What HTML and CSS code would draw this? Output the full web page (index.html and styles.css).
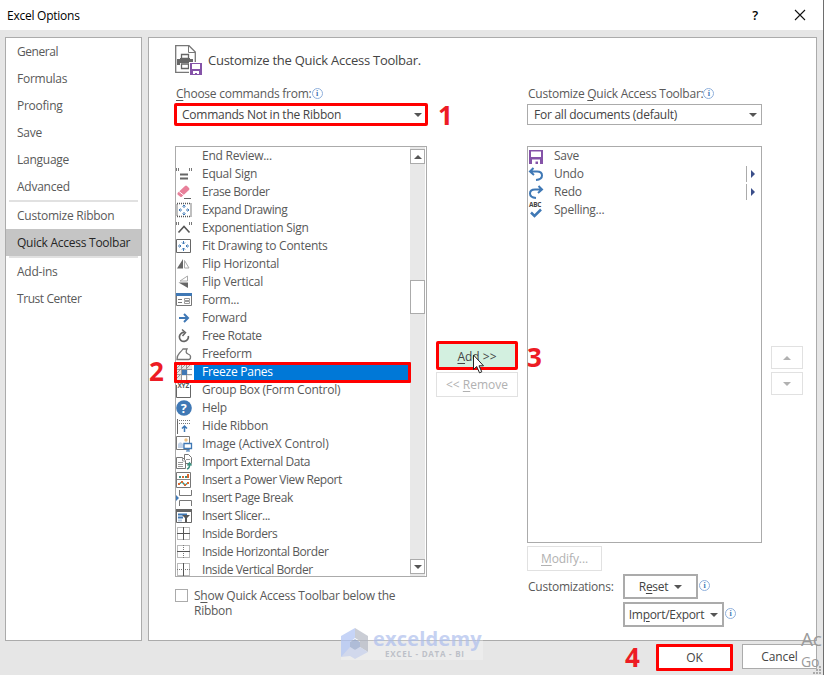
FILE: index.html
```html
<!DOCTYPE html>
<html lang="en">
<head>
    <meta charset="UTF-8">
    <meta name="viewport" content="width=device-width, initial-scale=1.0">
    <title>Excel Options</title>
    <link rel="stylesheet" href="styles.css">
</head>
<body>
    <div class="window">
        <header class="titlebar">
            <span class="title">Excel Options</span>
            <span class="help">?</span>
            <svg class="close" width="12" height="12" viewBox="0 0 12 12"><path d="M1 1l10 10M11 1L1 11" stroke="#111" stroke-width="1.1"/></svg>
        </header>

        <main class="main">
            <nav class="nav">
                <a class="tight">General</a>
                <a>Formulas</a>
                <a>Proofing</a>
                <a>Save</a>
                <a>Language</a>
                <a>Advanced</a>
                <hr>
                <a>Customize Ribbon</a>
                <a class="active">Quick Access Toolbar</a>
                <hr>
                <a>Add-ins</a>
                <a class="tight">Trust Center</a>
            </nav>

            <section class="panel">
                <div class="heading">
                    <svg width="28" height="31" viewBox="0 0 28 31">
                        <path d="M.7.7H14L20.3 7V27.3H.7z" fill="#fff" stroke="#777" stroke-width="1.3"/>
                        <path d="M13.5 1v6.5H20" fill="none" stroke="#777"/>
                        <path d="M2 14h3v-1h10v1h3v6h-3v-2H5v2H2z" fill="#666"/>
                        <path d="M6.5 9.5h7v4h-7zM6.5 19h7v4.500h-7z" fill="#fff" stroke="#666" stroke-width="1.3"/>
                        <path d="M14 17h14v14H14z" fill="#fff"/>
                        <path d="M15 18h12v12H15z" fill="#8553a8"/>
                        <path d="M17 19h8v5h-8zM18 26h6v3h-2v-1h-2v1h-2z" fill="#fff"/>
                    </svg>
                    <h1>Customize the Quick Access Toolbar.</h1>
                </div>

                <div class="columns">
                    <div class="col-left">
                        <div class="label"><span><u>C</u>hoose commands from:</span><i class="info">i</i></div>
                        <div class="select marked"><span>Commands Not in the Ribbon</span><b class="down"></b></div>
                        <div class="list commands">
                            <ul>
                                <li><svg></svg><span>End Review...</span></li>
                                <li><svg viewBox="0 0 16 16"><path d="M.5 2v3M2.500 2v3M13.500 2v3M15.500 2v3" stroke="#777"/><path d="M4 8.500h8M4 12.500h8" stroke="#666" stroke-width="2"/></svg><span>Equal Sign</span></li>
                                <li><svg viewBox="0 0 16 16"><path d="M1.500 9L9 2q1-1 2 0l2 2q1 1 0 2L6 12.500q-1 1-2 0L1.500 10.500z" fill="#e8809a"/><path d="M3 7.500l5 4" stroke="#fff"/><path d="M8 14.500h7" stroke="#666"/></svg><span class="tight">Erase Border</span></li>
                                <li><svg viewBox="0 0 16 16"><path d="M1 1.500h14v13H1z" fill="none" stroke="#555" stroke-width="1.500" stroke-dasharray="1 1"/><path d="M8 3v3M8 10v3M3 8h3M10 8h3" stroke="#3f78b5"/><path d="M6.500 4.500L8 3l1.500 1.500M6.500 11.500L8 13l1.500-1.500M4.500 6.500L3 8l1.500 1.500M11.500 6.500L13 8l-1.500 1.500" fill="none" stroke="#3f78b5"/></svg><span class="tight">Expand Drawing</span></li>
                                <li><svg viewBox="0 0 16 16"><path d="M.5 2v3M2.500 2v3M13.500 2v3M15.500 2v3" stroke="#777"/><path d="M2.500 12.500L8 6.500l5.500 6" fill="none" stroke="#555" stroke-width="1.600"/></svg><span>Exponentiation Sign</span></li>
                                <li><svg viewBox="0 0 16 16"><path d="M.5 1.500h14v13H.5z" fill="none" stroke="#666"/><path d="M7.500 3v3M7.500 10v3M2 8h3M10 8h3" stroke="#3f78b5"/><path d="M6 4.500L7.500 6 9 4.500M6 11.500L7.500 10 9 11.500M3.500 6.500L5 8 3.500 9.500M11.500 6.500L10 8l1.500 1.500" fill="none" stroke="#3f78b5"/></svg><span>Fit Drawing to Contents</span></li>
                                <li><svg viewBox="0 0 16 16"><path d="M1 12.500L7 3v9.500z" fill="#666"/><path d="M8.500 4.500V12H13z" fill="none" stroke="#aaa"/></svg><span>Flip Horizontal</span></li>
                                <li><svg viewBox="0 0 16 16"><path d="M11.500 2v5H4z" fill="none" stroke="#aaa"/><path d="M2.500 8.500H12V14z" fill="#666"/></svg><span>Flip Vertical</span></li>
                                <li><svg viewBox="0 0 16 16"><path d="M.5 2.500h15v11H.5z" fill="#fff" stroke="#777"/><path d="M0 1h16v3H0z" fill="#3f78b5"/><path d="M2 7.500h4M2 10.500h4" stroke="#777"/><path d="M8.500 6.500h5v2h-5zM8.500 9.500h5v2h-5z" fill="none" stroke="#999"/></svg><span>Form...</span></li>
                                <li><svg viewBox="0 0 16 16"><path d="M3 8h9M8 4l4 4-4 4" fill="none" stroke="#3f78b5" stroke-width="2"/></svg><span>Forward</span></li>
                                <li><svg viewBox="0 0 16 16"><path d="M8.500 4.500A4.500 4.500 0 1 0 12.300 8" fill="none" stroke="#666" stroke-width="1.700"/><path d="M6 1.500l3.500 3L6.500 8" fill="none" stroke="#666" stroke-width="1.500"/></svg><span class="tight">Free Rotate</span></li>
                                <li><svg viewBox="0 0 16 16"><path d="M1 13.500q0-4 2.500-6.500T7 3h4q-2 4 1 5t2.500 3.500q0 2-2 2z" fill="none" stroke="#777" stroke-width="1.300"/></svg><span>Freeform</span></li>
                                <li class="selected"><svg viewBox="0 0 16 16"><path d="M0 0h16v16H0z" fill="#e5e5e5"/><path d="M0 5.500h16M0 10.500h16M5.500 0v16M10.500 0v16M0 5L5 0M0 10L5 5M0 15l5-5M5 5l5-5M10 5l5-5" stroke="#999"/><path d="M6 6h5v5H6z" fill="#3f78b5"/><path d="M12 6h4v4h-4zM6 12h4v4H6zM12 12h4v4h-4z" fill="#fff"/></svg><span>Freeze Panes</span></li>
                                <li><svg viewBox="0 0 16 16"><path d="M.5 3v12.500h14V3" fill="none" stroke="#666"/><text x="1.500" y="6" font-size="6.500" font-weight="bold" fill="#555">XYZ</text></svg><span>Group Box (Form Control)</span></li>
                                <li><svg viewBox="0 0 16 16"><circle cx="8" cy="8" r="7.800" fill="#3f78b5"/><text x="4.700" y="12.500" font-size="12.500" font-weight="bold" fill="#fff">?</text></svg><span>Help</span></li>
                                <li><svg viewBox="0 0 16 16"><path d="M1.500 1v15" stroke="#666"/><path d="M1 2.500h14M3 5.500h12" stroke="#777" stroke-dasharray="1 1"/><path d="M8.500 14V8M6 10.500L8.500 8l2.500 2.500" fill="none" stroke="#3f78b5" stroke-width="1.500"/></svg><span>Hide Ribbon</span></li>
                                <li><svg viewBox="0 0 16 16"><path d="M.5.5h13v13H.5z" fill="#fff" stroke="#777"/><path d="M2 12V8q2-3 4-1l2 2v3z" fill="#c3d3e8"/><circle cx="10" cy="4" r="1.700" fill="#edc084"/><path d="M8 7.500h7.500v5H8z" fill="#fff" stroke="#3f78b5" stroke-width="1.300"/><path d="M10 15h4M12 13v2" stroke="#3f78b5"/></svg><span class="loose">Image (ActiveX Control)</span></li>
                                <li><svg viewBox="0 0 16 16"><path d="M8.500.5h4l3 3v6h-7z" fill="#fff" stroke="#777"/><path d="M.5 3.500h6l3 3v8h-9z" fill="#fff" stroke="#777"/><path d="M6.500 4v3H9M2 8.500h5M2 10.500h5M2 12.500h5M10 5.500h4" fill="none" stroke="#999"/><path d="M11 15q3-1 2.500-5M11.500 11.500l2-2.500 2 2.500" fill="none" stroke="#3f9180" stroke-width="1.500"/></svg><span class="tight">Import External Data</span></li>
                                <li><svg viewBox="0 0 16 16"><path d="M.5.5h14v15H.5z" fill="#fff" stroke="#777"/><path d="M1 7.500h13" stroke="#888"/><path d="M4 4v2M10 4v2" stroke="#3f9180" stroke-width="2"/><path d="M7 4v2M12 2v4" stroke="#d9682f" stroke-width="2"/><path d="M3 12l3-2 3 3 3-2" fill="none" stroke="#3f9180" stroke-width="1.500"/><path d="M2 11h2v2H2zM5 9h2v2H5zM8 12h2v2H8zM11 10h2v2h-2z" fill="#d9682f"/></svg><span class="tight">Insert a Power View Report</span></li>
                                <li><svg viewBox="0 0 16 16"><path d="M3.500 0v5.500h12V0M3.500 16v-5.500h12V16" fill="none" stroke="#777"/><path d="M0 5l3 3-3 3z" fill="#3f78b5"/></svg><span class="tight">Insert Page Break</span></li>
                                <li><svg viewBox="0 0 16 16"><path d="M.5 1.500h15v13H.5z" fill="#fff" stroke="#666"/><path d="M0 1h16v3H0z" fill="#666"/><path d="M2 6.500h9M2 9.500h5" stroke="#3f78b5" stroke-width="2"/><path d="M2 12.500h4" stroke="#b9cce4" stroke-width="2"/><path d="M6 7h8l-3 3v4H9v-4z" fill="#555"/></svg><span class="tight">Insert Slicer...</span></li>
                                <li><svg viewBox="0 0 16 16"><path d="M1.500 1.500h12v12h-12z" fill="none" stroke="#777" stroke-dasharray="1 1"/><path d="M7.500 1v13M1 7.500h13" stroke="#555"/></svg><span class="tight">Inside Borders</span></li>
                                <li><svg viewBox="0 0 16 16"><path d="M1.500 1.500h12v12h-12zM7.500 1v13" fill="none" stroke="#777" stroke-dasharray="1 1"/><path d="M1 7.500h13" stroke="#555"/></svg><span class="tight">Inside Horizontal Border</span></li>
                                <li><svg viewBox="0 0 16 16"><path d="M1.500 1.500h12v12h-12zM1 7.500h13" fill="none" stroke="#777" stroke-dasharray="1 1"/><path d="M7.500 1v13" stroke="#555"/></svg><span class="tight">Inside Vertical Border</span></li>
                            </ul>
                            <div class="scrollbar">
                                <div class="sb-btn"><b class="up"></b></div>
                                <div class="thumb"></div>
                                <div class="sb-btn"><b class="down"></b></div>
                            </div>
                        </div>
                        <label class="check"><span class="box"></span><span>S<u>h</u>ow Quick Access Toolbar below the<br>Ribbon</span></label>
                    </div>

                    <div class="col-mid">
                        <button class="btn add"><span><u>A</u>dd &gt;&gt;</span></button>
                        <button class="btn disabled"><span>&lt;&lt; <u>R</u>emove</span></button>
                    </div>

                    <div class="col-right">
                        <div class="label"><span>Customize <u>Q</u>uick Access Toolbar:</span><i class="info">i</i></div>
                        <div class="select"><span>For all documents (default)</span><b class="down"></b></div>
                        <div class="list toolbar">
                            <ul>
                                <li><svg viewBox="0 0 16 16"><path d="M1 2h14v14H1z" fill="#8553a8"/><path d="M3 3.500h10V9H3zM4 11.500h8V16h-2v-2.500H7.500V16H4z" fill="#fff"/></svg><span>Save</span></li>
                                <li><svg viewBox="0 0 16 16"><path d="M5.500 2L2 5.500 6 9M2.500 5.500H9q5 0 5 4t-6 4.500" fill="none" stroke="#3f78b5" stroke-width="2"/></svg><span>Undo</span><b class="more"></b></li>
                                <li><svg viewBox="0 0 16 16"><path d="M10.500 2L14 5.500 10 9M13.500 5.500H7q-5 0-5 4T8 14" fill="none" stroke="#3f78b5" stroke-width="2"/></svg><span>Redo</span><b class="more"></b></li>
                                <li><svg viewBox="0 0 16 16"><text x="1" y="5" font-size="6.500" font-weight="bold" fill="#444">ABC</text><path d="M3 10.500l3.500 3.500L13 7.500" fill="none" stroke="#3f78b5" stroke-width="2.500"/></svg><span>Spelling...</span></li>
                            </ul>
                        </div>
                        <button class="btn disabled modify"><span><u>M</u>odify...</span></button>
                        <div class="custom">
                            <span class="custom-label">Customizations:</span>
                            <div class="custom-btns">
                                <div class="row"><button class="btn thick reset"><span>R<u>e</u>set</span><b class="down"></b></button><i class="info">i</i></div>
                                <div class="row"><button class="btn thick import"><span>Im<u>p</u>ort/Export</span><b class="down"></b></button><i class="info">i</i></div>
                            </div>
                        </div>
                    </div>

                    <div class="col-order">
                        <button class="btn disabled"><b class="up"></b></button>
                        <button class="btn disabled"><b class="down"></b></button>
                    </div>
                </div>
            </section>
        </main>

        <footer class="footer">
            <button class="btn ok"><span>OK</span></button>
            <button class="btn cancel"><span>Cancel</span></button>
        </footer>

        <!-- step markers and overlays -->
        <span class="step s1">1</span>
        <span class="step s2">2</span>
        <span class="step s3">3</span>
        <span class="step s4">4</span>
        <div class="row-mark"></div>
        <svg class="cursor" width="14" height="22" viewBox="0 0 14 22"><path d="M1.500 1v14.500l3.200-3 2.800 6.300 2.300-1-2.800-6h4.500z" fill="#fff" stroke="#222"/></svg>

        <div class="watermark">
            <svg width="28" height="32" viewBox="0 0 28 32">
                <path d="M14 0L0 8v21l9-5V14l5-4z" fill="#b3c6f5"/>
                <path d="M14 0l13 8v16l-8-5v-6l-5-3z" fill="#b9bdc8"/>
                <path d="M0 29l9-10 5 3 5-3 8 5-13 7-5-3z" fill="#cbd4ee"/>
                <path d="M14 11l5 3v5l-5 3-5-3v-5z" fill="#9daed2"/>
            </svg>
            <div class="wm-text"><strong>exceldemy</strong><small>EXCEL - DATA - BI</small></div>
        </div>
        <div class="activate"><span class="ac">Ac</span><span class="go">Go</span></div>
        <svg class="grip" width="9" height="9" viewBox="0 0 9 9"><path d="M6 0h2v2H6zM3 3h2v2H3zM6 3h2v2H6zM0 6h2v2H0zM3 6h2v2H3zM6 6h2v2H6z" fill="#aaa"/></svg>
    </div>
</body>
</html>
```

FILE: styles.css
```css
* {
    box-sizing: border-box;
}
body {
    margin: 0;
    font-family: "Open Sans", "Noto Sans", sans-serif;
    font-size: 12px;
    letter-spacing: -0.25px;
    color: #595959;
}
.window {
    position: relative;
    width: 824px;
    height: 675px;
    overflow: hidden;
    background: #e6e6e6;
    border-right: 1px solid #6e6e6e;
    display: flex;
    flex-direction: column;
}
.titlebar {
    height: 30px;
    background: #fff;
    color: #000;
    display: flex;
    align-items: center;
    padding: 0 17px 0 7px;
}
.title {
    flex: 1;
}
.help {
    font-size: 13px;
    font-weight: 600;
    margin-right: 36px;
}
.main {
    display: flex;
    gap: 6px;
    padding: 7px 6px 0 5px;
    height: 611px;
}
.nav {
    width: 137px;
    background: #fff;
    border: 1px solid #ababab;
}
.nav a {
    display: flex;
    align-items: center;
    height: 27px;
    padding-left: 11px;
    white-space: nowrap;
}
.nav a.active {
    background: #c5c5c5;
    color: #262626;
}
.nav hr {
    border: 0;
    height: 2px;
    margin: 0 3px;
    background: #e1e1e1;
}
.tight {
    letter-spacing: -0.43px;
}
.loose {
    letter-spacing: -0.13px;
}
.panel {
    flex: 1;
    background: #fff;
    border: 1px solid #ababab;
    padding: 7px 13px 0 26px;
}
.heading {
    display: flex;
    height: 40px;
    gap: 5px;
}
h1 {
    margin: 5px 0 0;
    font-size: 13px;
    line-height: 20px;
    font-weight: normal;
    color: #444;
}
.columns {
    display: grid;
    grid-template-columns: 252px 82px 235px 32px;
    column-gap: 9px;
}
.label {
    display: flex;
    align-items: center;
    height: 19px;
    white-space: nowrap;
    padding: 0 0 3px 1px;
}
u {
    text-underline-offset: 2px;
}
.info {
    width: 11px;
    height: 11px;
    border: 1px solid #8fb0dc;
    border-radius: 50%;
    font: bold 8px/9px "Liberation Serif", serif;
    letter-spacing: 0;
    text-align: center;
    color: #3f78b5;
}
.select {
    height: 21px;
    border: 1px solid #ababab;
    display: flex;
    align-items: center;
    justify-content: space-between;
    padding: 0 4px 0 6px;
    color: #444;
}
.select.marked {
    outline: 3px solid #f00;
    outline-offset: -2px;
    border-radius: 1px;
}
.down, .up {
    width: 0;
    height: 0;
    border: 4px solid transparent;
}
.down {
    border-top-color: #555;
    border-bottom: 0;
}
.up {
    border-bottom-color: #555;
    border-top: 0;
}
.list {
    border: 1px solid #ababab;
    margin-top: 21px;
    display: flex;
    overflow: hidden;
}
.commands {
    height: 431px;
}
.toolbar {
    height: 397px;
}
.list ul {
    list-style: none;
    margin: 0;
    padding: 0;
    flex: 1;
}
.list li {
    display: flex;
    align-items: center;
    height: 18px;
}
.list li svg {
    width: 16px;
    height: 16px;
    margin-right: 2px;
    flex: none;
    overflow: visible;
}
.list li span {
    flex: 1;
    padding-left: 8px;
    line-height: 18px;
    white-space: nowrap;
}
.list li.selected span {
    background: #0078d7;
    color: #fff;
}
.more {
    width: 15px;
    height: 16px;
    border-left: 1px solid #ababab;
    display: flex;
    align-items: center;
}
.more::before {
    content: "";
    margin-left: 4px;
    border: 4px solid transparent;
    border-left-color: #3b4f8a;
    border-right: 0;
}
.scrollbar {
    width: 16px;
    padding: 2px 1px 2px 0;
    display: flex;
    flex-direction: column;
    background: linear-gradient(#e8e8e8, #e8e8e8) 0 0 / 15px 100% no-repeat;
}
.sb-btn {
    height: 15px;
    background: #fff;
    border: 1px solid #ababab;
    display: flex;
    align-items: center;
    justify-content: center;
}
.thumb {
    height: 34px;
    margin: 116px 0 auto;
    background: #fff;
    border: 1px solid #ababab;
}
.check {
    display: flex;
    margin-top: 11px;
    gap: 6px;
    line-height: 15px;
    white-space: nowrap;
}
.box {
    width: 13px;
    height: 13px;
    margin-top: 1px;
    border: 1px solid #ababab;
}
.btn {
    font: inherit;
    letter-spacing: -0.1px;
    background: #fff;
    border: 1px solid #ababab;
    color: #444;
    padding: 0;
    display: flex;
    align-items: center;
    justify-content: center;
    gap: 6px;
    white-space: nowrap;
}
.btn.disabled {
    border-color: #e1e1e1;
    color: #b1b1b1;
}
.disabled .down {
    border-top-color: #b1b1b1;
}
.disabled .up {
    border-bottom-color: #b1b1b1;
}
.col-mid {
    padding-top: 256px;
}
.col-mid .btn {
    width: 82px;
    height: 25px;
    letter-spacing: 0;
}
.col-mid .add {
    height: 29px;
    margin-bottom: 2px;
    padding-top: 2px;
    border: 3px solid #f00;
    border-radius: 2px;
    background: #d3f0e0;
}
.modify {
    width: 75px;
    height: 25px;
    margin-top: 3px;
}
.custom {
    display: flex;
    margin-top: 3px;
    padding-left: 1px;
}
.custom-label {
    width: 95px;
    line-height: 25px;
}
.row {
    display: flex;
    gap: 1px;
    margin-bottom: 3px;
}
.row .info {
    margin-top: 6px;
}
.btn.thick {
    height: 25px;
    border-width: 2px;
    letter-spacing: -0.3px;
}
.reset {
    width: 75px;
}
.import {
    width: 101px;
}
.col-order {
    padding-top: 261px;
}
.col-order .btn {
    width: 32px;
    height: 23px;
    margin-bottom: 3px;
}
.footer {
    display: flex;
    justify-content: flex-end;
    gap: 9px;
    padding: 3px 6px 0 0;
}
.footer .btn {
    height: 25px;
    width: 75px;
}
.footer .ok {
    width: 77px;
    height: 27px;
    padding-bottom: 1px;
    border: 3px solid #f00;
    border-radius: 1px;
}

/* overlays */
.step {
    position: absolute;
    font-family: "Noto Sans", sans-serif;
    font-size: 26px;
    line-height: 24px;
    font-weight: bold;
    letter-spacing: 0;
    color: #ed1c24;
}
.s1 {
    left: 438px;
    top: 103px;
}
.s2 {
    left: 149px;
    top: 359px;
}
.s3 {
    left: 527px;
    top: 345px;
}
.s4 {
    left: 625px;
    top: 645px;
}
.row-mark {
    position: absolute;
    left: 174px;
    top: 362px;
    width: 237px;
    height: 21px;
    border: 3px solid #f00;
    border-radius: 1px;
}
.cursor {
    position: absolute;
    left: 472px;
    top: 354px;
}
.watermark {
    position: absolute;
    left: 341px;
    top: 628px;
    width: 142px;
    height: 32px;
    display: flex;
    gap: 4px;
    opacity: 0.75;
    background: rgba(255, 255, 255, 0.35);
}
.wm-text {
    display: flex;
    flex-direction: column;
}
.wm-text strong {
    font-size: 20px;
    line-height: 21px;
    letter-spacing: 0.2px;
    color: #b3c3ee;
}
.wm-text small {
    font-size: 8px;
    line-height: 9px;
    font-weight: bold;
    letter-spacing: 0.75px;
    padding-left: 12px;
    color: #b0b4be;
}
.activate {
    position: absolute;
    left: 801px;
    top: 627px;
    display: flex;
    flex-direction: column;
    color: #9b9b9b;
}
.ac {
    font-size: 19px;
    line-height: 24px;
}
.go {
    font-size: 14px;
    line-height: 21px;
}
.grip {
    position: absolute;
    left: 813px;
    top: 666px;
}
```
